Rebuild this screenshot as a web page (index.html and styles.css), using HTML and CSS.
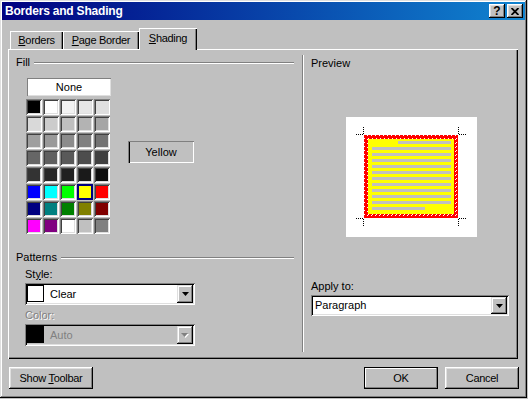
FILE: index.html
```html
<!DOCTYPE html>
<html>
<head>
<meta charset="utf-8">
<title>Borders and Shading</title>
<link rel="stylesheet" href="styles.css">
</head>
<body>
<div class="window">
  <div class="titlebar">
    <span class="title">Borders and Shading</span>
    <div class="tbtns">
      <span class="tbtn">?</span>
      <span class="tbtn"><svg width="8" height="7" viewBox="0 0 8 7"><path d="M0.5 0L7.5 7M7.5 0L0.5 7" stroke="#000" stroke-width="1.8"/></svg></span>
    </div>
  </div>
  <div class="tabs">
    <div class="tab t1"><span><u>B</u>orders</span></div>
    <div class="tab t2"><span><u>P</u>age Border</span></div>
    <div class="tab t3 active"><span><u>S</u>hading</span></div>
  </div>
  <div class="panel">
    <div class="left">
      <div class="ghead"><span>Fill</span><i class="etch"></i></div>
      <div class="fillrow">
        <div class="palette">
          <div class="none">None</div>
          <div class="grid">
            <span class="cell" style="background:#000"></span>
            <span class="cell" style="background:#fff"></span>
            <span class="cell" style="background:#f2f2f2"></span>
            <span class="cell" style="background:#e6e6e6"></span>
            <span class="cell" style="background:#dfdfdf"></span>
            <span class="cell" style="background:#d9d9d9"></span>
            <span class="cell" style="background:#cccccc"></span>
            <span class="cell" style="background:#bfbfbf"></span>
            <span class="cell" style="background:#b3b3b3"></span>
            <span class="cell" style="background:#a6a6a6"></span>
            <span class="cell" style="background:#9f9f9f"></span>
            <span class="cell" style="background:#999999"></span>
            <span class="cell" style="background:#8c8c8c"></span>
            <span class="cell" style="background:#808080"></span>
            <span class="cell" style="background:#737373"></span>
            <span class="cell" style="background:#666666"></span>
            <span class="cell" style="background:#606060"></span>
            <span class="cell" style="background:#595959"></span>
            <span class="cell" style="background:#4d4d4d"></span>
            <span class="cell" style="background:#404040"></span>
            <span class="cell" style="background:#333333"></span>
            <span class="cell" style="background:#262626"></span>
            <span class="cell" style="background:#202020"></span>
            <span class="cell" style="background:#1a1a1a"></span>
            <span class="cell" style="background:#0d0d0d"></span>
            <span class="cell" style="background:#0000ff"></span>
            <span class="cell" style="background:#00ffff"></span>
            <span class="cell" style="background:#00ff00"></span>
            <span class="cell selected" style="background:#ffff00"></span>
            <span class="cell" style="background:#ff0000"></span>
            <span class="cell" style="background:#000080"></span>
            <span class="cell" style="background:#008080"></span>
            <span class="cell" style="background:#008000"></span>
            <span class="cell" style="background:#808000"></span>
            <span class="cell" style="background:#800000"></span>
            <span class="cell" style="background:#ff00ff"></span>
            <span class="cell" style="background:#800080"></span>
            <span class="cell" style="background:#ffffff"></span>
            <span class="cell" style="background:#c0c0c0"></span>
            <span class="cell" style="background:#808080"></span>
          </div>
        </div>
        <div class="colorname">Yellow</div>
      </div>
      <div class="ghead patterns"><span>Patterns</span><i class="etch"></i></div>
      <div class="field">
        <div class="label">St<u>y</u>le:</div>
        <div class="combo">
          <span class="swatch sw-white"></span>
          <span class="ctext">Clear</span>
          <span class="dd"><svg width="7" height="4" viewBox="0 0 7 4"><path d="M0 0h7L3.5 4z" fill="#000"/></svg></span>
        </div>
      </div>
      <div class="field field2">
        <div class="label disabled">Color:</div>
        <div class="combo off">
          <span class="swatch sw-black"></span>
          <span class="ctext disabled">Auto</span>
          <span class="dd"><svg width="8" height="5" viewBox="0 0 8 5"><path d="M1 1h7L4.5 5z" fill="#fff"/><path d="M0 0h7L3.5 4z" fill="#808080"/></svg></span>
        </div>
      </div>
    </div>
    <div class="right">
      <div class="rlabel">Preview</div>
      <svg class="preview" width="131" height="120" viewBox="0 0 131 120" shape-rendering="crispEdges">
        <defs>
          <pattern id="hatch" width="4" height="4" patternUnits="userSpaceOnUse">
            <rect width="4" height="4" fill="#ff0000"/>
            <rect x="1" y="2" width="1" height="1" fill="#fff"/>
            <rect x="2" y="1" width="1" height="1" fill="#fff"/>
          </pattern>
        </defs>
        <rect width="131" height="120" fill="#fff"/>
        <path fill="url(#hatch)" fill-rule="evenodd" d="M18 18h94v83h-94z M22 22v75h86v-75z"/>
        <rect x="22" y="22" width="86" height="75" fill="#ffff00"/>
        <g fill="#c0c0c0">
          <rect x="52" y="24" width="53" height="3"/>
          <rect x="26" y="30" width="79" height="3"/>
          <rect x="26" y="36" width="79" height="3"/>
          <rect x="26" y="42" width="79" height="3"/>
          <rect x="26" y="48" width="79" height="3"/>
          <rect x="26" y="54" width="79" height="3"/>
          <rect x="26" y="60" width="79" height="3"/>
          <rect x="26" y="66" width="79" height="3"/>
          <rect x="26" y="72" width="79" height="3"/>
          <rect x="26" y="78" width="79" height="3"/>
          <rect x="26" y="84" width="79" height="3"/>
          <rect x="26" y="90" width="53" height="3"/>
        </g>
        <g stroke="#000" stroke-width="1" stroke-dasharray="1 1" fill="none">
          <path d="M10 17.5H18M17.5 10V18"/>
          <path d="M113 17.5H121M112.5 10V18"/>
          <path d="M10 101.5H18M17.5 102V110"/>
          <path d="M113 101.5H121M112.5 102V110"/>
        </g>
      </svg>
      <div class="rlabel apply">Apply to:</div>
      <div class="combo wide">
        <span class="ctext para">Paragraph</span>
        <span class="dd"><svg width="7" height="4" viewBox="0 0 7 4"><path d="M0 0h7L3.5 4z" fill="#000"/></svg></span>
      </div>
    </div>
  </div>
  <div class="footer">
    <div class="btn show"><span>Show <u>T</u>oolbar</span></div>
    <div class="spacer"></div>
    <div class="btn ok"><span>OK</span></div>
    <div class="btn cancel"><span>Cancel</span></div>
  </div>
</div>
</body>
</html>
```

FILE: styles.css
```css
* { box-sizing: border-box; }
html, body { margin: 0; padding: 0; }
body {
  width: 528px;
  height: 399px;
  overflow: hidden;
  background: #c0c0c0;
  font-family: "Liberation Sans", Arial, sans-serif;
  font-size: 11px;
  line-height: 13px;
  color: #000;
}
u { text-decoration: underline; text-underline-offset: 1px; }

.window {
  width: 527px;
  height: 398px;
  padding: 2px;
  background: #c0c0c0;
  box-shadow: inset -1px -1px #000, inset 1px 1px #dfdfdf, inset -2px -2px #808080, inset 2px 2px #fff;
  display: flex;
  flex-direction: column;
}

.titlebar {
  height: 18px;
  background: linear-gradient(to right, #000080, #1084d0);
  display: flex;
  align-items: center;
  padding: 0 2px 0 3px;
}
.title {
  flex: 1;
  color: #fff;
  font-weight: bold;
  font-size: 12px;
  letter-spacing: -0.2px;
}
.tbtns { display: flex; gap: 2px; }
.tbtn {
  width: 16px;
  height: 14px;
  background: #c0c0c0;
  box-shadow: inset -1px -1px #000, inset 1px 1px #fff, inset -2px -2px #808080, inset 2px 2px #dfdfdf;
  display: flex;
  align-items: center;
  justify-content: center;
  font-weight: bold;
  font-size: 12px;
  line-height: 12px;
}
.tbtn svg { display: block; margin-left: -1px; }

.tabs {
  display: flex;
  align-items: flex-end;
  height: 21px;
  margin-top: 8px;
  padding-left: 8px;
}
.tab {
  height: 18px;
  display: flex;
  align-items: center;
  justify-content: center;
  background: #c0c0c0;
  letter-spacing: -0.3px;
  box-shadow: inset 1px 0 #fff, inset 0 1px #fff, inset -1px 0 #000, inset -2px 0 #808080;
  padding-top: 1px;
}
.t1 { width: 53px; }
.t2 { width: 76px; }
.t3 { width: 58px; }
.tab.active {
  height: 22px;
  margin-bottom: -1px;
  position: relative;
  z-index: 1;
  padding-top: 0;
  padding-bottom: 2px;
}

.panel {
  margin-left: 6px;
  width: 510px;
  height: 310px;
  padding: 1px 2px 2px 1px;
  box-shadow: inset 1px 1px #fff, inset -1px -1px #000, inset -2px -2px #808080;
  display: grid;
  grid-template-columns: 293px 1fr;
}

.left {
  padding: 6px 8px 0 7px;
  display: flex;
  flex-direction: column;
}
.ghead {
  display: flex;
  align-items: center;
  height: 13px;
  gap: 4px;
}
.etch {
  flex: 1;
  height: 2px;
  border-top: 1px solid #808080;
  border-bottom: 1px solid #fff;
  margin-top: 1px;
}

.fillrow {
  display: flex;
  align-items: flex-start;
  margin-top: 9px;
  padding-left: 10px;
}
.palette { display: flex; flex-direction: column; }
.none {
  width: 84px;
  height: 18px;
  margin-left: 1px;
  background: #fff;
  box-shadow: inset 1px 1px #808080, inset -1px -1px #dfdfdf;
  display: flex;
  align-items: center;
  justify-content: center;
}
.grid {
  margin-top: 3px;
  display: grid;
  grid-template-columns: repeat(5, 16px);
  grid-auto-rows: 16px;
  gap: 1px;
}
.cell {
  display: block;
  box-shadow: inset 1px 1px #808080, inset -1px -1px #fff, inset 2px 2px #404040, inset -2px -2px #dfdfdf;
}
.cell.selected {
  box-shadow: inset 0 0 0 2px #000080;
}
.colorname {
  margin-left: 17px;
  margin-top: 63px;
  width: 66px;
  height: 22px;
  display: flex;
  align-items: center;
  justify-content: center;
  box-shadow: inset 1px 1px #808080, inset 2px 0 #000, inset -1px -1px #fff;
}

.patterns { margin-top: 17px; }
.field { padding-left: 9px; margin-top: 4px; }
.field2 { margin-top: 4px; }
.label { height: 13px; margin-bottom: 2px; }
.disabled { color: #808080; text-shadow: 1px 1px #fff; }

.combo {
  width: 170px;
  height: 22px;
  padding: 2px;
  background: #fff;
  box-shadow: inset 1px 1px #808080, inset -1px -1px #fff, inset 2px 2px #000, inset -2px -2px #dfdfdf;
  display: flex;
  align-items: flex-start;
}
.combo.off { background: #c0c0c0; }
.swatch {
  width: 17px;
  height: 17px;
  border: 1px solid #000;
}
.sw-white { background: #fff; }
.sw-black { background: #000; }
.ctext {
  flex: 1;
  margin-left: 6px;
  line-height: 18px;
}
.ctext.para { margin-left: 2px; }
.ctext.disabled { text-shadow: none; }
.dd {
  width: 16px;
  height: 18px;
  background: #c0c0c0;
  box-shadow: inset -1px -1px #000, inset 1px 1px #dfdfdf, inset -2px -2px #808080, inset 2px 2px #fff;
  display: flex;
  align-items: center;
  justify-content: center;
}
.dd svg { display: block; }

.right {
  margin: 5px 0 5px 0;
  padding: 2px 0 0 9px;
  box-shadow: inset 1px 0 #808080, inset 2px 0 #fff;
  display: flex;
  flex-direction: column;
}
.rlabel { height: 13px; }
.preview {
  display: block;
  margin-top: 47px;
  margin-left: 35px;
}
.apply { margin-top: 43px; }
.combo.wide { width: 198px; margin-top: 2px; height: 21px; }
.combo.wide .dd { height: 17px; }
.combo.wide .ctext { line-height: 17px; }

.footer {
  display: flex;
  margin-top: 8px;
  margin-left: 7px;
  width: 510px;
}
.spacer { flex: 1; }
.btn {
  height: 22px;
  display: flex;
  align-items: center;
  justify-content: center;
  letter-spacing: -0.3px;
  box-shadow: inset -1px -1px #000, inset 1px 1px #fff, inset -2px -2px #808080, inset 2px 2px #dfdfdf;
}
.show { width: 84px; }
.ok {
  width: 74px;
  box-shadow: inset 0 0 0 1px #000, inset -2px -2px #808080, inset 2px 2px #fff;
}
.cancel { width: 74px; margin-left: 7px; }
```
